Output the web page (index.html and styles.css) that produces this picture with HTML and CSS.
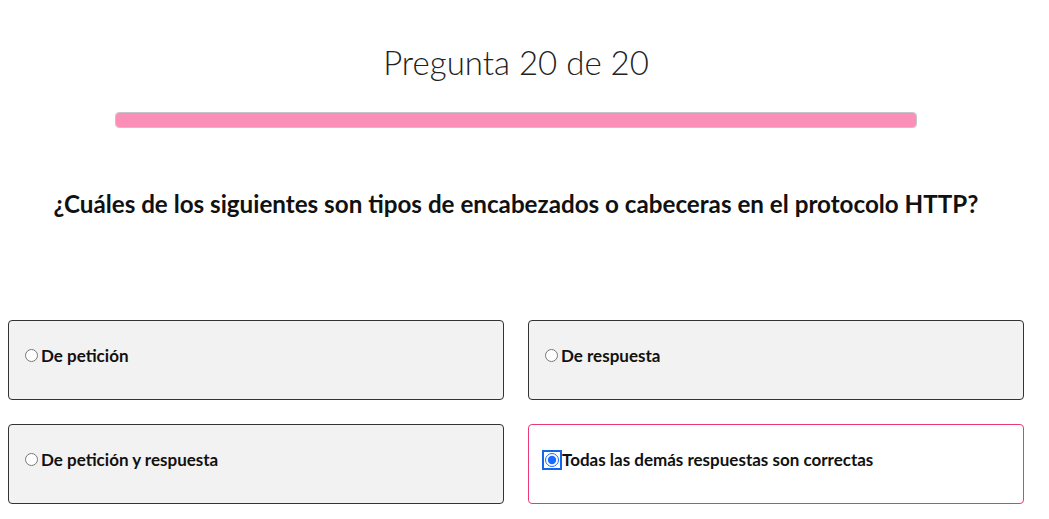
FILE: index.html
```html
<!DOCTYPE html>
<html lang="es">
<head>
<meta charset="utf-8">
<title>Pregunta 20 de 20</title>
<link rel="stylesheet" href="styles.css">
</head>
<body>
<div class="quiz">
  <h1 class="counter">Pregunta 20 de 20</h1>
  <div class="progress"><div class="progress-fill" style="width:100%"></div></div>
  <h2 class="question">¿Cuáles de los siguientes son tipos de encabezados o cabeceras en el protocolo HTTP?</h2>
  <div class="options">
    <label class="option"><input type="radio" name="q20" class="radio"><span>De petición</span></label>
    <label class="option"><input type="radio" name="q20" class="radio"><span>De respuesta</span></label>
    <label class="option"><input type="radio" name="q20" class="radio"><span>De petición y respuesta</span></label>
    <label class="option selected"><input type="radio" name="q20" class="radio focused" checked><span>Todas las demás respuestas son correctas</span></label>
  </div>
</div>
</body>
</html>
```

FILE: styles.css
```css
html, body {
  margin: 0;
  padding: 0;
  background: #fff;
}
body {
  font-family: Lato, "Liberation Sans", sans-serif;
  color: #111;
}
.quiz {
  width: 1016px;
  margin-left: 8px;
  display: flex;
  flex-direction: column;
  align-items: center;
}
.counter {
  margin: 40px 0 0;
  height: 44px;
  font-size: 33px;
  line-height: 44px;
  font-weight: 300;
  color: #222;
}
.progress {
  margin-top: 28px;
  width: 802px;
  height: 16px;
  box-sizing: border-box;
  border: 1px solid #c4c4c4;
  border-radius: 4px;
  background: #eee;
  overflow: hidden;
}
.progress-fill {
  height: 100%;
  background: #fc8fb7;
}
.question {
  margin: 61px 0 0;
  font-size: 24.2px;
  line-height: 30px;
  font-weight: 700;
  color: #111;
  text-align: center;
}
.options {
  margin-top: 101px;
  width: 100%;
  display: grid;
  grid-template-columns: 1fr 1fr;
  gap: 24px;
}
.option {
  box-sizing: border-box;
  height: 80px;
  padding: 24px 16px 0;
  background: #f2f2f2;
  border: 1px solid #333;
  border-radius: 4px;
  display: flex;
  align-items: flex-start;
  font-size: 17px;
  font-weight: 700;
  line-height: 22px;
  color: #111;
}
.option.selected {
  background: #fff;
  border-color: #ea3a76;
}
.radio {
  width: 13px;
  height: 13px;
  margin: 4px 3px 0 0;
  flex: none;
}
.radio.focused {
  width: 14px;
  height: 14px;
  margin: 4px 3px 0 0;
  accent-color: #1a6cff;
  outline: 2px solid #1565e8;
  outline-offset: 1px;
  border-radius: 50%;
}
```
